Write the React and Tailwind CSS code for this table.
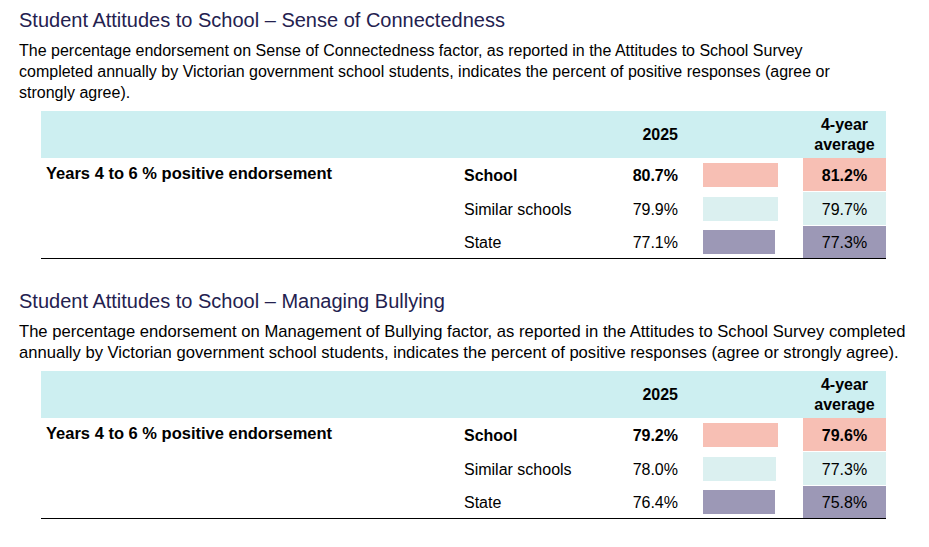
import React from 'react'

const SECTIONS = [
  {
    title: 'Student Attitudes to School – Sense of Connectedness',
    bodySize: 'text-[16px]',
    lines: [
      'The percentage endorsement on Sense of Connectedness factor, as reported in the Attitudes to School Survey',
      'completed annually by Victorian government school students, indicates the percent of positive responses (agree or',
      'strongly agree).',
    ],
    rows: [
      { name: 'School', value: '80.7%', avg: '81.2%', bar: 75 },
      { name: 'Similar schools', value: '79.9%', avg: '79.7%', bar: 75 },
      { name: 'State', value: '77.1%', avg: '77.3%', bar: 72 },
    ],
  },
  {
    title: 'Student Attitudes to School – Managing Bullying',
    bodySize: 'text-[16.6px]',
    lines: [
      'The percentage endorsement on Management of Bullying factor, as reported in the Attitudes to School Survey completed',
      'annually by Victorian government school students, indicates the percent of positive responses (agree or strongly agree).',
    ],
    rows: [
      { name: 'School', value: '79.2%', avg: '79.6%', bar: 75 },
      { name: 'Similar schools', value: '78.0%', avg: '77.3%', bar: 73 },
      { name: 'State', value: '76.4%', avg: '75.8%', bar: 72 },
    ],
  },
]

const ROW_STYLES = [
  { bar: 'bg-[#f7bfb4]', cell: 'bg-[#f7bfb4]', bold: true, h: 'h-[33px]' },
  { bar: 'bg-[#dbf0f0]', cell: 'bg-[#dbf0f0]', bold: false, h: 'h-[33px]' },
  { bar: 'bg-[#9c98b6]', cell: 'bg-[#9c98b6]', bold: false, h: 'h-[32px]' },
]

function Table({ rows }) {
  return (
    <div className="ml-[41px] w-[845px] text-[16px] text-black">
      <div className="flex h-[47px] bg-[#cdeff1] font-bold">
        <div className="w-[557px]" />
        <div className="flex w-[80px] items-center justify-end">2025</div>
        <div className="w-[125px]" />
        <div className="flex w-[83px] flex-col items-center justify-center leading-[20px]">
          <span>4-year</span>
          <span>average</span>
        </div>
      </div>
      <div className="flex border-b border-black">
        <div className="w-[423px] pl-[5px] pt-[3px] text-[16.5px] font-bold">Years 4 to 6 % positive endorsement</div>
        <div className="flex flex-col gap-px">
          {rows.map((r, i) => {
            const s = ROW_STYLES[i]
            return (
              <div key={r.name} className={`flex items-center ${s.h} ${s.bold ? 'font-bold' : ''}`}>
                <div className="w-[134px] pt-[2px]">{r.name}</div>
                <div className="w-[80px] pt-[2px] text-right">{r.value}</div>
                <div className="w-[25px]" />
                <div className="w-[100px]">
                  <div className={`h-[24px] ${s.bar}`} style={{ width: r.bar }} />
                </div>
                <div className={`flex h-full w-[83px] items-center justify-center pt-[2px] ${s.cell}`}>{r.avg}</div>
              </div>
            )
          })}
        </div>
      </div>
    </div>
  )
}

export default function App() {
  return (
    <div className="h-[547px] w-[929px] bg-white pl-[19px] font-['Liberation_Sans',Arial,sans-serif] text-black">
      {SECTIONS.map((sec, i) => (
        <section key={sec.title} className={i === 0 ? 'pt-[8px]' : 'pt-[30px]'}>
          <h2 className="text-[20px] leading-[24px] text-[#24214f]">{sec.title}</h2>
          <p className={`mt-[8px] leading-[21px] ${sec.bodySize}`}>
            {sec.lines.map((l, j) => (
              <React.Fragment key={j}>
                {l}
                {j < sec.lines.length - 1 && <br />}
              </React.Fragment>
            ))}
          </p>
          <div className="-ml-[19px] mt-[8px]">
            <Table rows={sec.rows} />
          </div>
        </section>
      ))}
    </div>
  )
}
